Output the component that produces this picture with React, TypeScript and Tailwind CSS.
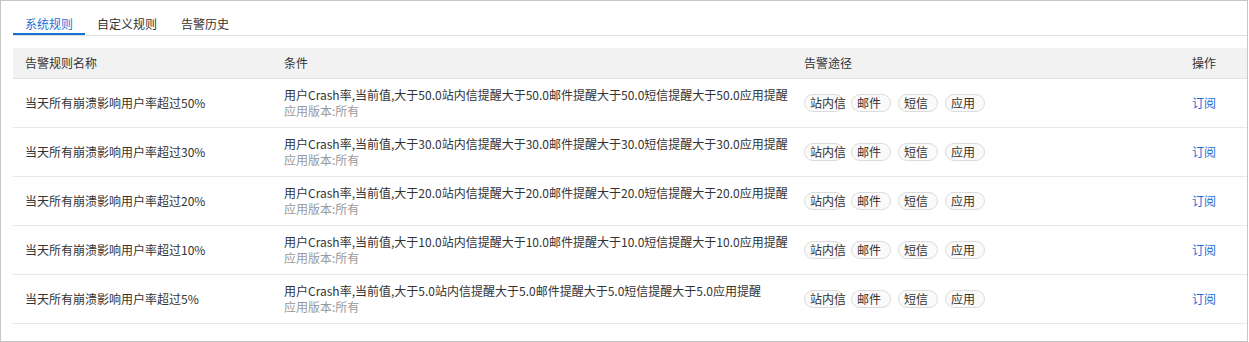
import React, { useState } from 'react'

type Rule = {
  id: number
  name: string
  threshold: string
}

const rules: Rule[] = [
  { id: 1, name: '当天所有崩溃影响用户率超过50%', threshold: '50.0' },
  { id: 2, name: '当天所有崩溃影响用户率超过30%', threshold: '30.0' },
  { id: 3, name: '当天所有崩溃影响用户率超过20%', threshold: '20.0' },
  { id: 4, name: '当天所有崩溃影响用户率超过10%', threshold: '10.0' },
  { id: 5, name: '当天所有崩溃影响用户率超过5%', threshold: '5.0' },
]

const tabs = ['系统规则', '自定义规则', '告警历史']
const channels = ['站内信', '邮件', '短信', '应用']

export default function App() {
  const [activeTab, setActiveTab] = useState(0)

  return (
    <div
      className="w-[1248px] h-[342px] border border-[#c6c6c6] bg-white pl-3 pt-[14px] text-[12px] text-[#333]"
      style={{ fontFamily: '"Noto Sans CJK SC", "Noto Sans", sans-serif' }}
    >
      {/* Tabs */}
      <div className="flex border-b border-[#dedede]">
        {tabs.map((tab, i) => (
          <button
            key={tab}
            onClick={() => setActiveTab(i)}
            className={`px-3 leading-[18px] border-b-2 ${
              activeTab === i ? 'border-[#1570d6] text-[#1f6fd6]' : 'border-transparent text-[#333]'
            }`}
          >
            {tab}
          </button>
        ))}
      </div>

      {/* 规则列表 */}
      <table className="mt-3 w-full border-collapse table-fixed">
        <colgroup>
          <col className="w-[259px]" />
          <col className="w-[520px]" />
          <col className="w-[388px]" />
          <col />
        </colgroup>
        <thead>
          <tr className="bg-[#f2f2f2] border-b border-[#e4e4e4]">
            <th className="h-[30px] px-3 text-left font-normal">告警规则名称</th>
            <th className="px-3 text-left font-normal">条件</th>
            <th className="px-3 text-left font-normal">告警途径</th>
            <th className="px-3 text-left font-normal">操作</th>
          </tr>
        </thead>
        <tbody>
          {rules.map((rule) => (
            <tr key={rule.id} className="border-b border-[#e8e8e8]">
              <td className="h-[49px] px-3">{rule.name}</td>
              <td className="px-3 leading-4 whitespace-nowrap">
                <div>
                  用户Crash率,当前值,大于{rule.threshold}站内信提醒大于{rule.threshold}邮件提醒大于{rule.threshold}短信提醒大于{rule.threshold}应用提醒
                </div>
                <div className="text-[#999]">应用版本:所有</div>
              </td>
              <td className="px-3">
                <div className="flex gap-[7px]">
                  {channels.map((c) => (
                    <span
                      key={c}
                      className="w-10 h-[18px] shrink-0 rounded-full border border-[#dcdcdc] bg-[#fafafa] pl-[5px] leading-4 whitespace-nowrap"
                    >
                      {c}
                    </span>
                  ))}
                </div>
              </td>
              <td className="px-3">
                <a className="text-[#1a6fd6] cursor-pointer">订阅</a>
              </td>
            </tr>
          ))}
        </tbody>
      </table>
    </div>
  )
}
